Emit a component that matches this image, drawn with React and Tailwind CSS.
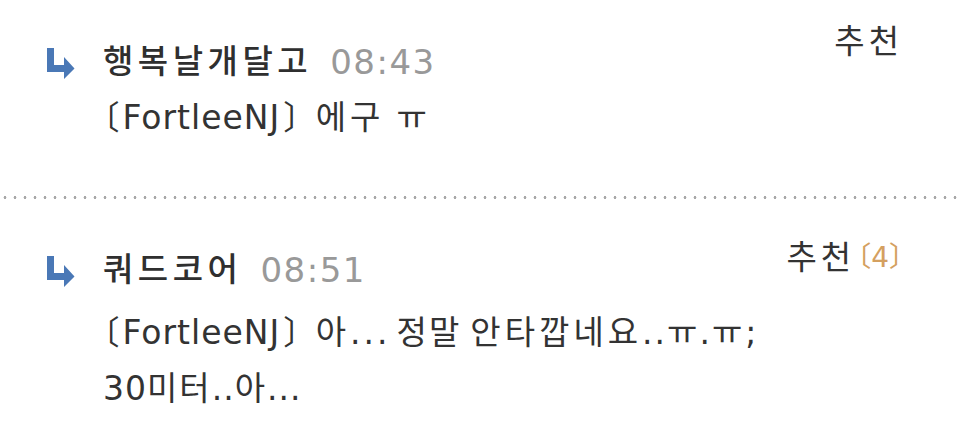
import React from 'react';

function ReplyArrow() {
  return (
    <svg width="30" height="34" viewBox="0 0 30 34" className="shrink-0">
      <path d="M2 3 H9 V20 H19 V12 L29.5 23.5 L19 34 V27 H2 Z" fill="#4a78b6" />
    </svg>
  );
}

// Hangul runs are spaced wider than the Latin text around them
function K({ children, className = 'tracking-[4px]' }) {
  return <span className={className}>{children}</span>;
}

function Nick() {
  return (
    <>
      <span className="mr-[2px]">〔</span>FortleeNJ<span className="ml-[3px]">〕</span>
    </>
  );
}

function Comment({ name, time, lines, count, voteTop, bodyTop, headTop }) {
  return (
    <div className="flex justify-between">
      <div className="flex flex-col">
        <div className={`${headTop} flex items-center h-[60px]`}>
          <ReplyArrow />
          <span className="ml-[28px] text-[33px] text-[#2f2f2f] font-medium tracking-[4.5px]">{name}</span>
          <span className="ml-[18px] text-[34px] text-[#999] tracking-[1.5px]">{time}</span>
        </div>
        <div className={bodyTop}>
          {lines.map((l, i) => (
            <div key={i} className="pl-[58px] h-[56px] flex items-center text-[33px] text-[#333] tracking-[1px] [font-feature-settings:'halt'] whitespace-nowrap">{l}</div>
          ))}
        </div>
      </div>
      <div className={`${voteTop} flex items-center h-[48px] pr-[54px] text-[33px] text-[#333] tracking-[4px]`}>
        추천{count && <span className="ml-[2px] text-[28px] tracking-normal text-[#d4a060] [font-feature-settings:'halt']">〔{count}〕</span>}
      </div>
    </div>
  );
}

export default function App() {
  return (
    <div className="w-[957px] h-[447px] bg-white overflow-hidden" style={{ fontFamily: '"DejaVu Sans", "Noto Sans CJK KR", sans-serif' }}>
      <div className="pl-[45px] pt-[30px] h-[196px]">
        <Comment
          name="행복날개달고"
          time="08:43"
          headTop="mt-[2px]"
          voteTop="-mt-[12px]"
          bodyTop="-mt-[2px]"
          lines={[
            <>
              <Nick />
              <K className="ml-[15px] tracking-[4px]">에구</K>
              <K className="ml-[12px]">ㅠ</K>
            </>,
          ]}
        />
      </div>
      <div className="h-[3px] bg-[radial-gradient(circle,#a8a8a8_1.3px,transparent_1.6px)] bg-[length:10px_3px]" />
      <div className="pl-[45px] pt-[41px]">
        <Comment
          name="쿼드코어"
          time="08:51"
          count={4}
          headTop=""
          voteTop="-mt-[6px]"
          bodyTop="mt-[5px]"
          lines={[
            <>
              <Nick />
              <K className="ml-[15px] tracking-[4px]">아</K>
              <span className="tracking-[3px]">...</span>
              <K className="ml-[6px] tracking-[2px]">정말</K>
              <K className="ml-[9px] tracking-[4px]">안타깝네요</K>
              <span className="tracking-[2px]">..</span>
              <K className="tracking-[2px]">ㅠ</K>
              <span className="tracking-[2px]">.</span>
              <K className="tracking-[2px]">ㅠ</K>
              <span className="ml-[1px]">;</span>
            </>,
            <>
              30<K className="tracking-[2px]">미터</K>..<K className="tracking-[2px]">아</K>...
            </>,
          ]}
        />
      </div>
    </div>
  );
}
